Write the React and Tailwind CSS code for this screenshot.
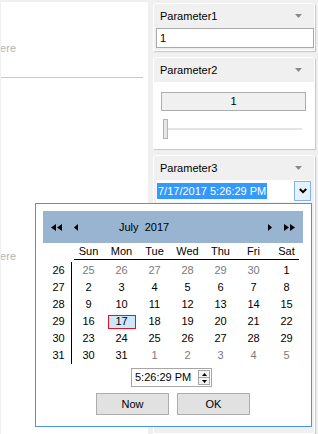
const weeks = [
  { w: 26, days: [25, 26, 27, 28, 29, 30, 1], dim: [0, 1, 2, 3, 4, 5] },
  { w: 27, days: [2, 3, 4, 5, 6, 7, 8], dim: [] },
  { w: 28, days: [9, 10, 11, 12, 13, 14, 15], dim: [] },
  { w: 29, days: [16, 17, 18, 19, 20, 21, 22], dim: [] },
  { w: 30, days: [23, 24, 25, 26, 27, 28, 29], dim: [] },
  { w: 31, days: [30, 31, 1, 2, 3, 4, 5], dim: [2, 3, 4, 5, 6] },
];

const dayNames = ['Sun', 'Mon', 'Tue', 'Wed', 'Thu', 'Fri', 'Sat'];

function Caret() {
  return (
    <svg width="7" height="4" viewBox="0 0 7 4" className="shrink-0">
      <path d="M0 0h7L3.5 4z" fill="#8a8a8a" />
    </svg>
  );
}

function PanelHeader({ title }) {
  return (
    <div className="h-[24px] flex items-center pl-[6px] pr-[12px] text-[#000]">
      <span>{title}</span>
      <span className="ml-auto">
        <Caret />
      </span>
    </div>
  );
}

export default function App() {
  return (
    <div className="w-[318px] h-[434px] bg-[#f0f0f0] overflow-hidden relative font-['Liberation_Sans',Arial,sans-serif] text-[11px] leading-[13px]">
      <div className="flex h-full pt-[2px]">
        {/* left drop zone */}
        <div className="ml-[1px] w-[147px] h-full bg-white">
          <div className="mt-[40px] w-[15px] flex justify-end overflow-hidden whitespace-nowrap text-[#b4b4b4]">
            Drop data items here
          </div>
          <div className="mt-[22px] h-px w-[142px] bg-[#c8c8c8]" />
          <div className="mt-[172px] w-[15px] flex justify-end overflow-hidden whitespace-nowrap text-[#b4b4b4]">
            Drop data items here
          </div>
        </div>

        {/* parameter panels */}
        <div className="ml-[5px] w-[162px] flex flex-col gap-[6px] pt-[1px]">
          <div className="bg-[#f0f0f0] border border-white rounded-t-[3px] shadow-[1px_1px_1px_rgba(0,0,0,0.18)] pb-[2px]">
            <PanelHeader title="Parameter1" />
            <div className="ml-[2px] h-[20px] bg-white border border-[#a9a9a9] flex items-center pl-[3px]">1</div>
          </div>

          <div className="bg-[#f0f0f0] border border-white rounded-t-[3px] shadow-[1px_1px_1px_rgba(0,0,0,0.18)]">
            <PanelHeader title="Parameter2" />
            <div className="bg-white pt-[10px] pb-[9px] px-[7px]">
              <div className="h-[19px] mr-[1px] bg-[#f0f0f0] border border-[#adadad] flex items-center justify-center">1</div>
              <div className="mt-[8px] flex items-center pl-[2px] pr-[5px]">
                <div className="w-[5px] h-[20px] bg-[#e7e7e7] border border-[#b4b4b4]" />
                <div className="flex-1 h-[2px] bg-[#dadada] border-y border-[#e4e4e4]" />
              </div>
            </div>
          </div>

          <div className="bg-[#f0f0f0] border border-white rounded-t-[3px] shadow-[1px_1px_1px_rgba(0,0,0,0.18)] flex-1">
            <PanelHeader title="Parameter3" />
            <div className="ml-[2px] mr-[3px] h-[22px] bg-white flex items-center">
              <span className="ml-[1px] px-[1px] h-[16px] leading-[16px] bg-[#3399ff] text-white whitespace-nowrap">
                7/17/2017 5:26:29 PM
              </span>
              <div className="ml-auto w-[17px] h-[20px] bg-[#e5f1fb] border border-[#7eb4ea] flex items-center justify-center">
                <svg width="8" height="6" viewBox="0 0 8 6">
                  <path d="M0.8 1L4 4.2L7.2 1" fill="none" stroke="#000" strokeWidth="2" />
                </svg>
              </div>
            </div>
          </div>
        </div>
      </div>

      {/* date-time popup */}
      <div className="absolute left-[35px] top-[203px] w-[277px] h-[224px] bg-white border border-[#4a93e6] pt-[7px] pl-[7px] pr-[8px]">
        <div className="h-[32px] bg-[#99b4d1] flex items-center pl-[8px] pr-[8px]">
          <svg width="11" height="7" viewBox="0 0 11 7">
            <path d="M5 0L0 3.5L5 7z M11 0L6 3.5L11 7z" fill="#000" />
          </svg>
          <svg width="5" height="7" viewBox="0 0 5 7" className="ml-[12px]">
            <path d="M4 0L0 3.5L4 7z" fill="#000" />
          </svg>
          <span className="ml-[40px] whitespace-nowrap">July&nbsp; 2017</span>
          <svg width="5" height="7" viewBox="0 0 5 7" className="ml-auto">
            <path d="M1 0L5 3.5L1 7z" fill="#000" />
          </svg>
          <svg width="11" height="7" viewBox="0 0 11 7" className="ml-[12px]">
            <path d="M0 0L5 3.5L0 7z M6 0L11 3.5L6 7z" fill="#000" />
          </svg>
        </div>

        <div className="flex">
          <div className="w-[30px]" />
          <div className="flex flex-col">
            <div className="grid grid-cols-7 w-[231px] h-[16px] items-center">
              {dayNames.map((d) => (
                <div key={d} className="text-center">{d}</div>
              ))}
            </div>
            <div className="ml-[2px] w-[225px] h-px bg-black" />
          </div>
        </div>

        <div className="flex mt-[2px]">
          <div className="w-[30px] border-r border-black flex flex-col">
            {weeks.map((r) => (
              <div key={r.w} className="h-[17px] flex items-center justify-center pl-[3px]">{r.w}</div>
            ))}
          </div>
          <div className="flex flex-col">
            {weeks.map((r) => (
              <div key={r.w} className="grid grid-cols-7 w-[231px]">
                {r.days.map((d, i) => {
                  const dim = r.dim.includes(i);
                  const sel = r.w === 29 && d === 17;
                  return (
                    <div key={i} className="h-[17px] flex items-center justify-center">
                      {sel ? (
                        <span className="w-[28px] h-[14px] bg-[#cce8ff] border border-[#e81123] flex items-center justify-center">
                          {d}
                        </span>
                      ) : (
                        <span className={dim ? 'text-[#7a7a7a]' : 'text-black'}>{d}</span>
                      )}
                    </div>
                  );
                })}
              </div>
            ))}
          </div>
        </div>

        <div className="mt-[4px] ml-[88px] w-[81px] h-[19px] border border-[#a6a6a6] flex items-center pl-[3px] pr-[1px]">
          <span>5:26:29 PM</span>
          <div className="ml-auto w-[12px] h-[15px] border border-[#a6a6a6] bg-[#f2f2f2] flex flex-col">
            <div className="flex-1 flex items-center justify-center border-b border-[#a6a6a6]">
              <svg width="5" height="3" viewBox="0 0 5 3">
                <path d="M0 3L2.5 0L5 3z" fill="#000" />
              </svg>
            </div>
            <div className="flex-1 flex items-center justify-center">
              <svg width="5" height="3" viewBox="0 0 5 3">
                <path d="M0 0L2.5 3L5 0z" fill="#000" />
              </svg>
            </div>
          </div>
        </div>

        <div className="mt-[6px] flex justify-center gap-[8px]">
          <div className="w-[73px] h-[22px] bg-[#e1e1e1] border border-[#adadad] flex items-center justify-center">Now</div>
          <div className="w-[73px] h-[22px] bg-[#e1e1e1] border border-[#adadad] flex items-center justify-center">OK</div>
        </div>
      </div>
    </div>
  );
}
